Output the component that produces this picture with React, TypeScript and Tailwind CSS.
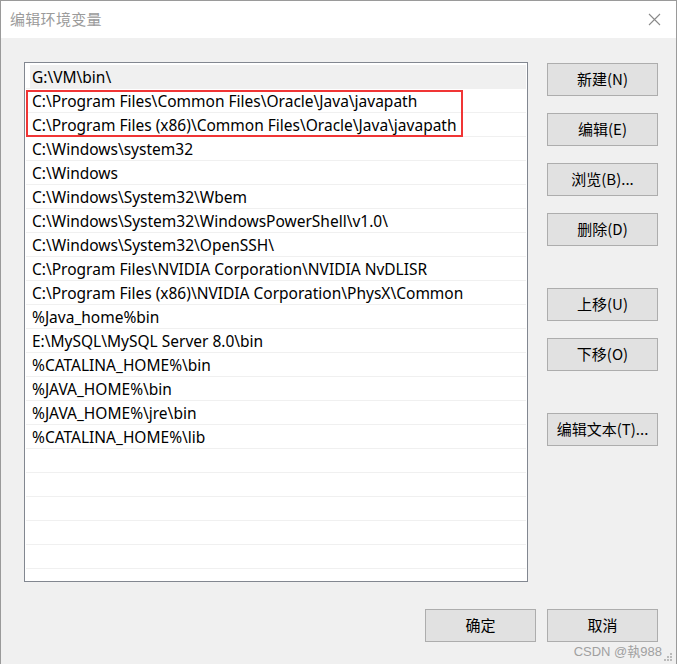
import React from "react";

const rows = [
  "G:\\VM\\bin\\",
  "C:\\Program Files\\Common Files\\Oracle\\Java\\javapath",
  "C:\\Program Files (x86)\\Common Files\\Oracle\\Java\\javapath",
  "C:\\Windows\\system32",
  "C:\\Windows",
  "C:\\Windows\\System32\\Wbem",
  "C:\\Windows\\System32\\WindowsPowerShell\\v1.0\\",
  "C:\\Windows\\System32\\OpenSSH\\",
  "C:\\Program Files\\NVIDIA Corporation\\NVIDIA NvDLISR",
  "C:\\Program Files (x86)\\NVIDIA Corporation\\PhysX\\Common",
  "%Java_home%bin",
  "E:\\MySQL\\MySQL Server 8.0\\bin",
  "%CATALINA_HOME%\\bin",
  "%JAVA_HOME%\\bin",
  "%JAVA_HOME%\\jre\\bin",
  "%CATALINA_HOME%\\lib",
  "",
  "",
  "",
  "",
  "",
  "",
];

function Btn({ label, className = "" }: { label: string; className?: string }) {
  return (
    <div
      className={
        "w-[111px] h-[33px] flex items-center justify-center bg-[#e1e1e1] border border-[#adadad] text-[15px] text-black " +
        className
      }
    >
      {label}
    </div>
  );
}

export default function App() {
  return (
    <div
      className="relative w-[677px] h-[664px] bg-[#f0f0f0] border-l border-r border-t border-[#9a9a9a] flex flex-col overflow-hidden"
      style={{ fontFamily: '"Noto Sans", "Noto Sans CJK SC", sans-serif' }}
    >
      <div className="h-[37px] bg-white flex items-center justify-between pl-[9px] pr-[15px] shrink-0">
        <span className="text-[15px] text-[#9b9b9b] tracking-[0.3px]">编辑环境变量</span>
        <svg width="13" height="13" viewBox="0 0 13 13">
          <path d="M1 1L12 12M12 1L1 12" stroke="#8a8a8a" strokeWidth="1.1" />
        </svg>
      </div>

      <div className="flex pl-[23px] pt-[24px] gap-[19px]">
        <div className="relative w-[504px] h-[520px] bg-white border border-[#828790] pt-[2px] px-[1px] overflow-hidden">
          {rows.map((r, i) => (
            <div
              key={i}
              className="h-[24px] border-b border-[#f0f0f0] flex items-center text-[15.5px] text-black whitespace-nowrap"
            >
              <div
                className={
                  "h-full flex-1 flex items-center ml-[4px] pl-[2px] pt-[2px] " + (i === 0 ? "bg-[#f0f0f0]" : "")
                }
              >
                {r}
              </div>
            </div>
          ))}
          <div className="absolute left-[1px] top-[27px] w-[437px] h-[47px] border-2 border-[#f03535]" />
        </div>

        <div className="flex flex-col pt-[1px]" style={{ fontFamily: '"Noto Sans CJK SC", "Noto Sans", sans-serif' }}>
          <Btn label="新建(N)" />
          <Btn label="编辑(E)" className="mt-[17px]" />
          <Btn label="浏览(B)..." className="mt-[17px]" />
          <Btn label="删除(D)" className="mt-[17px]" />
          <Btn label="上移(U)" className="mt-[42px]" />
          <Btn label="下移(O)" className="mt-[17px]" />
          <Btn label="编辑文本(T)..." className="mt-[42px]" />
        </div>
      </div>

      <div
        className="flex justify-end gap-[11px] pr-[18px] mt-[27px]"
        style={{ fontFamily: '"Noto Sans CJK SC", "Noto Sans", sans-serif' }}
      >
        <Btn label="确定" />
        <Btn label="取消" />
      </div>

      <div className="absolute right-[14px] bottom-[6px] text-[13px] text-[#a0a0a0] leading-none" style={{ fontFamily: '"Liberation Sans", "Noto Sans CJK TC", sans-serif' }}>
        CSDN @執988
      </div>
      <svg className="absolute right-[3px] bottom-[2px]" width="10" height="10" viewBox="0 0 10 10">
        <rect x="7" y="1" width="2" height="2" fill="#bbb" />
        <rect x="4" y="4" width="2" height="2" fill="#bbb" />
        <rect x="7" y="4" width="2" height="2" fill="#bbb" />
        <rect x="1" y="7" width="2" height="2" fill="#bbb" />
        <rect x="4" y="7" width="2" height="2" fill="#bbb" />
        <rect x="7" y="7" width="2" height="2" fill="#bbb" />
      </svg>
    </div>
  );
}
